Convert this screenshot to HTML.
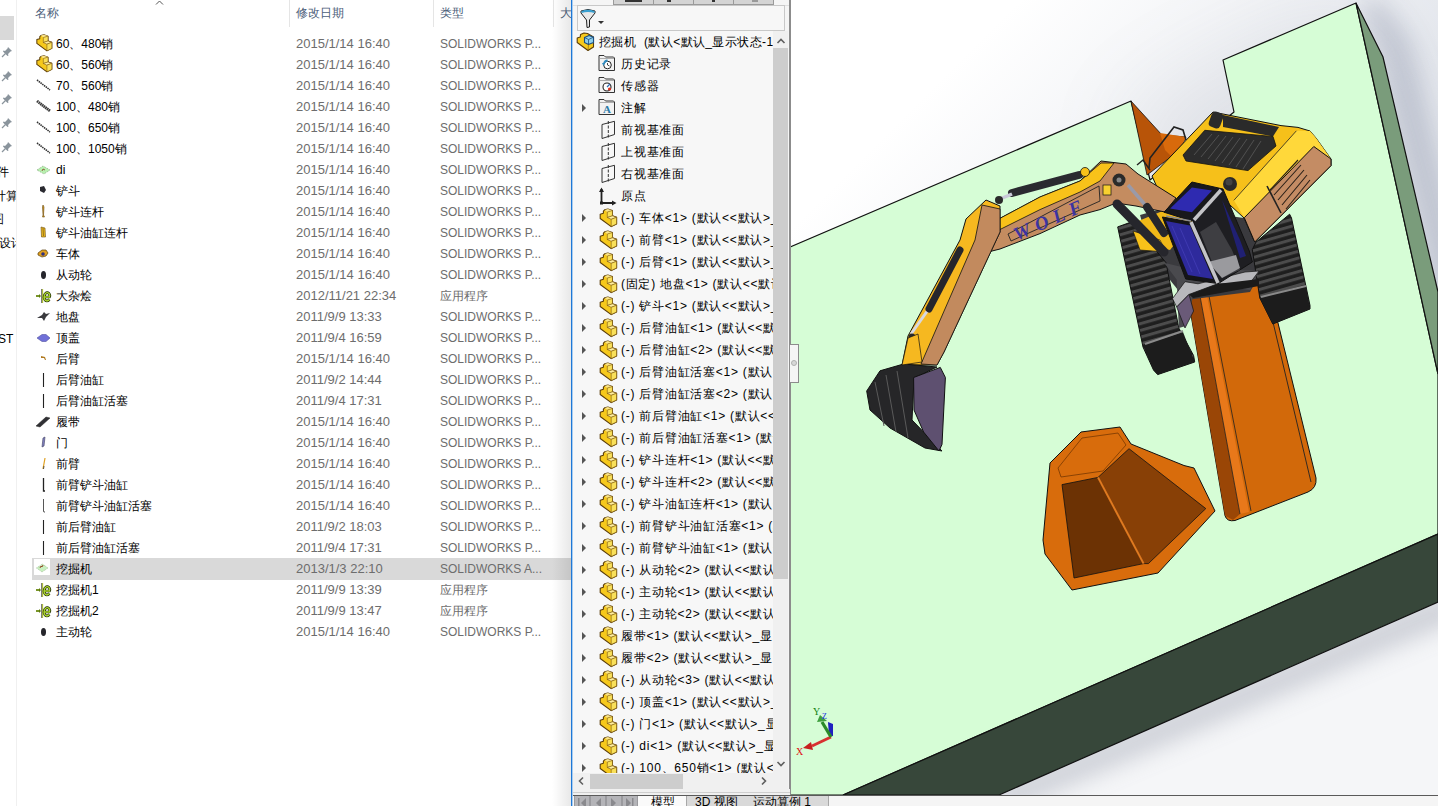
<!DOCTYPE html><html><head><meta charset="utf-8"><style>
*{margin:0;padding:0;box-sizing:border-box}
html,body{width:1438px;height:806px;overflow:hidden;background:#fff;font-family:"Liberation Sans",sans-serif;}
.abs{position:absolute}
.nav{left:0;top:0;width:16px;height:806px;background:#fff;overflow:hidden}
.navsel{left:0;top:16px;width:14px;height:24px;background:#d9d9d9}
.navdiv{left:16px;top:0;width:1px;height:806px;background:#f0f0f0}
.hdr{font-size:12px;color:#4c607a;top:5px;line-height:16px;white-space:nowrap}
.coldiv{top:0;width:1px;height:27px;background:#e5e5e5}
.row{left:0;height:21px;width:571px}
.name{position:absolute;left:56px;top:1px;font-size:12px;line-height:21px;color:#000;white-space:nowrap;font-weight:500}
.date{position:absolute;left:296px;top:0;font-size:13px;line-height:21px;color:#6d6d6d;white-space:nowrap}
.type{position:absolute;left:440px;top:1px;font-size:12px;line-height:21px;color:#6d6d6d;white-space:nowrap}
.ico{position:absolute;left:36px;top:3px}
.sw{left:571px;top:0;width:219px;height:806px;background:#f5f5f5;overflow:hidden}
.tr{position:absolute;left:0;height:22px;width:202px;white-space:nowrap;overflow:hidden}
.tt{position:absolute;top:0;font-size:12px;line-height:22px;color:#000;white-space:nowrap;letter-spacing:0.75px;font-weight:500}
.exp{position:absolute;left:11px;top:7px;width:0;height:0;border-top:4px solid transparent;border-bottom:4px solid transparent;border-left:4px solid #555}
</style></head><body>

<div class="abs nav">
<div class="abs navsel"></div>
<svg class="abs" style="left:1px;top:46px" width="12" height="12" viewBox="0 0 12 12"><path d="M7 1 L11 5 L9.5 5.5 L7 8 L7.5 9.5 L6.5 10 L2 5.5 L2.5 4.5 L4 5 L6.5 2.5 Z" fill="#8a949c"/><path d="M4.5 7.5 L1 11" stroke="#8a949c" stroke-width="1.3"/></svg>
<svg class="abs" style="left:1px;top:70px" width="12" height="12" viewBox="0 0 12 12"><path d="M7 1 L11 5 L9.5 5.5 L7 8 L7.5 9.5 L6.5 10 L2 5.5 L2.5 4.5 L4 5 L6.5 2.5 Z" fill="#8a949c"/><path d="M4.5 7.5 L1 11" stroke="#8a949c" stroke-width="1.3"/></svg>
<svg class="abs" style="left:1px;top:93px" width="12" height="12" viewBox="0 0 12 12"><path d="M7 1 L11 5 L9.5 5.5 L7 8 L7.5 9.5 L6.5 10 L2 5.5 L2.5 4.5 L4 5 L6.5 2.5 Z" fill="#8a949c"/><path d="M4.5 7.5 L1 11" stroke="#8a949c" stroke-width="1.3"/></svg>
<svg class="abs" style="left:1px;top:117px" width="12" height="12" viewBox="0 0 12 12"><path d="M7 1 L11 5 L9.5 5.5 L7 8 L7.5 9.5 L6.5 10 L2 5.5 L2.5 4.5 L4 5 L6.5 2.5 Z" fill="#8a949c"/><path d="M4.5 7.5 L1 11" stroke="#8a949c" stroke-width="1.3"/></svg>
<svg class="abs" style="left:1px;top:141px" width="12" height="12" viewBox="0 0 12 12"><path d="M7 1 L11 5 L9.5 5.5 L7 8 L7.5 9.5 L6.5 10 L2 5.5 L2.5 4.5 L4 5 L6.5 2.5 Z" fill="#8a949c"/><path d="M4.5 7.5 L1 11" stroke="#8a949c" stroke-width="1.3"/></svg>
<div class="abs" style="left:-15px;top:164px;font-size:12px;line-height:16px;color:#000;white-space:nowrap">文件</div>
<div class="abs" style="left:-6px;top:188px;font-size:12px;line-height:16px;color:#000;white-space:nowrap">计算</div>
<div class="abs" style="left:-8px;top:211px;font-size:12px;line-height:16px;color:#000;white-space:nowrap">图</div>
<div class="abs" style="left:-1px;top:235px;font-size:12px;line-height:16px;color:#000;white-space:nowrap">设计</div>
<div class="abs" style="left:-2px;top:331px;font-size:12px;line-height:16px;color:#000;white-space:nowrap">ST</div>
</div>
<div class="abs navdiv"></div>
<svg class="abs" style="left:155px;top:0" width="9" height="6"><path d="M1 4.5 L4.5 1 L8 4.5" stroke="#555" fill="none" stroke-width="1"/></svg>
<div class="abs hdr" style="left:35px">名称</div>
<div class="abs coldiv" style="left:289px"></div>
<div class="abs hdr" style="left:296px">修改日期</div>
<div class="abs coldiv" style="left:433px"></div>
<div class="abs hdr" style="left:440px">类型</div>
<div class="abs coldiv" style="left:553px"></div>
<div class="abs hdr" style="left:560px">大小</div>
<div class="abs row" style="top:33px"><svg class="ico" width="20" height="20" viewBox="0 0 20 20" style="left:34px;top:1px"></svg><svg class="ico" width="24" height="24" viewBox="0 0 24 24" style="left:33px;top:-1px;transform:scale(0.915);transform-origin:0 0;"><path d="M4.2 8.3 L7.4 7.3 L7.4 5.1 L8.6 3.9 L11.9 3.1 L16.4 4.5 L16.5 9.8 L20.6 11.3 L20.6 17.9 L15.2 20.6 L4.2 12.5 Z" fill="#f6c91c" stroke="#5a3c08" stroke-width="1.1" stroke-linejoin="round"/><path d="M8.6 3.9 L11.9 3.1 L16.4 4.5 L11.3 6 Z" fill="#fbe58a"/><path d="M11.3 6 L16.4 4.5 L16.5 9.8 L11.3 11.5 Z" fill="#f9e05a" stroke="#7a5510" stroke-width="0.6"/><path d="M11.3 11.5 L16.5 9.8 L20.6 11.3 L15.2 13.3 Z" fill="#fdeea0" stroke="#7a5510" stroke-width="0.6"/><path d="M15.2 13.3 L20.6 11.3 L20.6 17.9 L15.2 20.6 Z" fill="#f9e05a" stroke="#7a5510" stroke-width="0.6"/></svg><div class="name">60、480销</div><div class="date">2015/1/14 16:40</div><div class="type">SOLIDWORKS P...</div></div>
<div class="abs row" style="top:54px"><svg class="ico" width="20" height="20" viewBox="0 0 20 20" style="left:34px;top:1px"></svg><svg class="ico" width="24" height="24" viewBox="0 0 24 24" style="left:33px;top:-1px;transform:scale(0.915);transform-origin:0 0;"><path d="M4.2 8.3 L7.4 7.3 L7.4 5.1 L8.6 3.9 L11.9 3.1 L16.4 4.5 L16.5 9.8 L20.6 11.3 L20.6 17.9 L15.2 20.6 L4.2 12.5 Z" fill="#f6c91c" stroke="#5a3c08" stroke-width="1.1" stroke-linejoin="round"/><path d="M8.6 3.9 L11.9 3.1 L16.4 4.5 L11.3 6 Z" fill="#fbe58a"/><path d="M11.3 6 L16.4 4.5 L16.5 9.8 L11.3 11.5 Z" fill="#f9e05a" stroke="#7a5510" stroke-width="0.6"/><path d="M11.3 11.5 L16.5 9.8 L20.6 11.3 L15.2 13.3 Z" fill="#fdeea0" stroke="#7a5510" stroke-width="0.6"/><path d="M15.2 13.3 L20.6 11.3 L20.6 17.9 L15.2 20.6 Z" fill="#f9e05a" stroke="#7a5510" stroke-width="0.6"/></svg><div class="name">60、560销</div><div class="date">2015/1/14 16:40</div><div class="type">SOLIDWORKS P...</div></div>
<div class="abs row" style="top:75px"><svg class="ico" width="20" height="20" viewBox="0 0 20 20" style="left:34px;top:1px"><path d="M3 4 L16 14" stroke="#333" stroke-width="1.6" stroke-dasharray="1.5 0.7"/></svg><div class="name">70、560销</div><div class="date">2015/1/14 16:40</div><div class="type">SOLIDWORKS P...</div></div>
<div class="abs row" style="top:96px"><svg class="ico" width="20" height="20" viewBox="0 0 20 20" style="left:34px;top:1px"><path d="M3 4 L16 14" stroke="#3a3a3a" stroke-width="2.8" stroke-dasharray="1.6 0.5"/></svg><div class="name">100、480销</div><div class="date">2015/1/14 16:40</div><div class="type">SOLIDWORKS P...</div></div>
<div class="abs row" style="top:117px"><svg class="ico" width="20" height="20" viewBox="0 0 20 20" style="left:34px;top:1px"><path d="M3 4 L16 14" stroke="#333" stroke-width="1.6" stroke-dasharray="1.5 0.7"/></svg><div class="name">100、650销</div><div class="date">2015/1/14 16:40</div><div class="type">SOLIDWORKS P...</div></div>
<div class="abs row" style="top:138px"><svg class="ico" width="20" height="20" viewBox="0 0 20 20" style="left:34px;top:1px"><path d="M3 4 L16 14" stroke="#333" stroke-width="1.6" stroke-dasharray="1.5 0.7"/></svg><div class="name">100、1050销</div><div class="date">2015/1/14 16:40</div><div class="type">SOLIDWORKS P...</div></div>
<div class="abs row" style="top:159px"><svg class="ico" width="20" height="20" viewBox="0 0 20 20" style="left:34px;top:1px"><path d="M3 10 L9 6 L16 10 L10 14 Z" fill="#b8f0b0" stroke="#6a8a60" stroke-width="0.6" stroke-dasharray="1 1"/><path d="M8 11 L9 9 L11 10" stroke="#804020" stroke-width="0.8" fill="none"/></svg><div class="name">di</div><div class="date">2015/1/14 16:40</div><div class="type">SOLIDWORKS P...</div></div>
<div class="abs row" style="top:180px"><svg class="ico" width="20" height="20" viewBox="0 0 20 20" style="left:34px;top:1px"><path d="M6 6 L10 5 L12 9 L10 12 L6 10 Z" fill="#2a2a30"/></svg><div class="name">铲斗</div><div class="date">2015/1/14 16:40</div><div class="type">SOLIDWORKS P...</div></div>
<div class="abs row" style="top:201px"><svg class="ico" width="20" height="20" viewBox="0 0 20 20" style="left:34px;top:1px"><path d="M9 3 L10 5 L9.5 13 L10.5 15 L8.5 15 L9 13 L8.5 5 Z" fill="#d49a20" stroke="#6a4a10" stroke-width="0.6"/></svg><div class="name">铲斗连杆</div><div class="date">2015/1/14 16:40</div><div class="type">SOLIDWORKS P...</div></div>
<div class="abs row" style="top:222px"><svg class="ico" width="20" height="20" viewBox="0 0 20 20" style="left:34px;top:1px"><path d="M7 4 L11 5 L11.5 14 L7.5 14 Z" fill="#e8b820" stroke="#6a4a10" stroke-width="0.6"/><path d="M9 5 L9.5 13" stroke="#6a4a10" stroke-width="0.6"/></svg><div class="name">铲斗油缸连杆</div><div class="date">2015/1/14 16:40</div><div class="type">SOLIDWORKS P...</div></div>
<div class="abs row" style="top:243px"><svg class="ico" width="20" height="20" viewBox="0 0 20 20" style="left:34px;top:1px"><path d="M4 9 L8 6 L12 6 L14 9 L12 12 L8 13 L4 11 Z" fill="#e0a020" stroke="#5a4010" stroke-width="0.7"/><circle cx="9" cy="10" r="1.8" fill="#303080"/></svg><div class="name">车体</div><div class="date">2015/1/14 16:40</div><div class="type">SOLIDWORKS P...</div></div>
<div class="abs row" style="top:264px"><svg class="ico" width="20" height="20" viewBox="0 0 20 20" style="left:34px;top:1px"><ellipse cx="9.5" cy="10" rx="2.5" ry="4" fill="#26262c"/></svg><div class="name">从动轮</div><div class="date">2015/1/14 16:40</div><div class="type">SOLIDWORKS P...</div></div>
<div class="abs row" style="top:285px"><svg class="ico" width="20" height="20" viewBox="0 0 20 20" style="left:34px;top:1px"><path d="M2 10 L6 10" stroke="#6a8a10" stroke-width="1.8"/><path d="M5 8 L7 10 L5 12 Z" fill="#5a7a08"/><path d="M8 3 L8 17" stroke="#222" stroke-width="1.2"/><path d="M8.7 3 L8.7 17" stroke="#c8e020" stroke-width="0.8"/><path d="M15.5 13.5 Q13 16 11 14 Q9 11.5 11 8 Q13 5.5 15 7.5 Q16.5 9.5 15.5 11 L10.5 11" fill="none" stroke="#1a2a00" stroke-width="2.6"/><path d="M15.5 13.5 Q13 16 11 14 Q9 11.5 11 8 Q13 5.5 15 7.5 Q16.5 9.5 15.5 11 L10.5 11" fill="none" stroke="#b0d830" stroke-width="1.4"/></svg><div class="name">大杂烩</div><div class="date">2012/11/21 22:34</div><div class="type">应用程序</div></div>
<div class="abs row" style="top:306px"><svg class="ico" width="20" height="20" viewBox="0 0 20 20" style="left:34px;top:1px"><path d="M3 11 L8 8 L10 5 L12 7 L16 6 L12 10 L10 14 L8 11 Z" fill="#3a3a3e"/></svg><div class="name">地盘</div><div class="date">2011/9/9 13:33</div><div class="type">SOLIDWORKS P...</div></div>
<div class="abs row" style="top:327px"><svg class="ico" width="20" height="20" viewBox="0 0 20 20" style="left:34px;top:1px"><path d="M3 10 L8 6.5 L12 6.5 L16 10 L12 13.5 L8 13.5 Z" fill="#7070d8" stroke="#5050a0" stroke-width="0.6"/></svg><div class="name">顶盖</div><div class="date">2011/9/4 16:59</div><div class="type">SOLIDWORKS P...</div></div>
<div class="abs row" style="top:348px"><svg class="ico" width="20" height="20" viewBox="0 0 20 20" style="left:34px;top:1px"><path d="M7 7 L11 8 L12 11 L11 11 L10 9 L7 9 Z" fill="#b07a20"/></svg><div class="name">后臂</div><div class="date">2015/1/14 16:40</div><div class="type">SOLIDWORKS P...</div></div>
<div class="abs row" style="top:369px"><svg class="ico" width="20" height="20" viewBox="0 0 20 20" style="left:34px;top:1px"><path d="M9.5 3 L9.5 17" stroke="#222" stroke-width="1.1"/></svg><div class="name">后臂油缸</div><div class="date">2011/9/2 14:44</div><div class="type">SOLIDWORKS P...</div></div>
<div class="abs row" style="top:390px"><svg class="ico" width="20" height="20" viewBox="0 0 20 20" style="left:34px;top:1px"><path d="M9.5 3 L9.5 17" stroke="#222" stroke-width="1.1"/></svg><div class="name">后臂油缸活塞</div><div class="date">2011/9/4 17:31</div><div class="type">SOLIDWORKS P...</div></div>
<div class="abs row" style="top:411px"><svg class="ico" width="20" height="20" viewBox="0 0 20 20" style="left:34px;top:1px"><path d="M2 14 L12 5 L16 6 L6 15 Z" fill="#303034" stroke="#222" stroke-width="0.5"/></svg><div class="name">履带</div><div class="date">2015/1/14 16:40</div><div class="type">SOLIDWORKS P...</div></div>
<div class="abs row" style="top:432px"><svg class="ico" width="20" height="20" viewBox="0 0 20 20" style="left:34px;top:1px"><path d="M8 14 L9 5 L11 4 L10 13 Z" fill="#8080c0" stroke="#404060" stroke-width="0.6"/></svg><div class="name">门</div><div class="date">2015/1/14 16:40</div><div class="type">SOLIDWORKS P...</div></div>
<div class="abs row" style="top:453px"><svg class="ico" width="20" height="20" viewBox="0 0 20 20" style="left:34px;top:1px"><path d="M9 15 L11 4" stroke="#e0a020" stroke-width="1.2"/><path d="M9.5 15 L10 12" stroke="#333" stroke-width="0.8"/></svg><div class="name">前臂</div><div class="date">2015/1/14 16:40</div><div class="type">SOLIDWORKS P...</div></div>
<div class="abs row" style="top:474px"><svg class="ico" width="20" height="20" viewBox="0 0 20 20" style="left:34px;top:1px"><path d="M9.5 3 L9.5 16 L11 16" stroke="#222" stroke-width="1.3" fill="none"/></svg><div class="name">前臂铲斗油缸</div><div class="date">2015/1/14 16:40</div><div class="type">SOLIDWORKS P...</div></div>
<div class="abs row" style="top:495px"><svg class="ico" width="20" height="20" viewBox="0 0 20 20" style="left:34px;top:1px"><path d="M9.5 3 L9.5 15 Q9.5 16.5 11 16" stroke="#444" stroke-width="0.9" fill="none"/></svg><div class="name">前臂铲斗油缸活塞</div><div class="date">2015/1/14 16:40</div><div class="type">SOLIDWORKS P...</div></div>
<div class="abs row" style="top:516px"><svg class="ico" width="20" height="20" viewBox="0 0 20 20" style="left:34px;top:1px"><path d="M9.5 3 L9.5 17" stroke="#222" stroke-width="1.1"/></svg><div class="name">前后臂油缸</div><div class="date">2011/9/2 18:03</div><div class="type">SOLIDWORKS P...</div></div>
<div class="abs row" style="top:537px"><svg class="ico" width="20" height="20" viewBox="0 0 20 20" style="left:34px;top:1px"><path d="M9.5 3 L9.5 17" stroke="#222" stroke-width="1.1"/></svg><div class="name">前后臂油缸活塞</div><div class="date">2011/9/4 17:31</div><div class="type">SOLIDWORKS P...</div></div>
<div class="abs" style="left:32px;top:558px;width:539px;height:22px;background:#d9d9d9"></div>
<div class="abs row" style="top:558px"><svg class="ico" width="20" height="20" viewBox="0 0 20 20" style="left:34px;top:1px"><rect x="0" y="0" width="16" height="16" fill="#fff"/><path d="M2.5 9 L8.5 5 L14 9 L8 13 Z" fill="#c8f0c0" stroke="#80a070" stroke-width="0.5" stroke-dasharray="1 0.8"/><path d="M6 9 L7 7 L8 8 L9 6" stroke="#903818" stroke-width="0.9" fill="none"/></svg><div class="name">挖掘机</div><div class="date">2013/1/3 22:10</div><div class="type">SOLIDWORKS A...</div></div>
<div class="abs row" style="top:579px"><svg class="ico" width="20" height="20" viewBox="0 0 20 20" style="left:34px;top:1px"><path d="M2 10 L6 10" stroke="#6a8a10" stroke-width="1.8"/><path d="M5 8 L7 10 L5 12 Z" fill="#5a7a08"/><path d="M8 3 L8 17" stroke="#222" stroke-width="1.2"/><path d="M8.7 3 L8.7 17" stroke="#c8e020" stroke-width="0.8"/><path d="M15.5 13.5 Q13 16 11 14 Q9 11.5 11 8 Q13 5.5 15 7.5 Q16.5 9.5 15.5 11 L10.5 11" fill="none" stroke="#1a2a00" stroke-width="2.6"/><path d="M15.5 13.5 Q13 16 11 14 Q9 11.5 11 8 Q13 5.5 15 7.5 Q16.5 9.5 15.5 11 L10.5 11" fill="none" stroke="#b0d830" stroke-width="1.4"/></svg><div class="name">挖掘机1</div><div class="date">2011/9/9 13:39</div><div class="type">应用程序</div></div>
<div class="abs row" style="top:600px"><svg class="ico" width="20" height="20" viewBox="0 0 20 20" style="left:34px;top:1px"><path d="M2 10 L6 10" stroke="#6a8a10" stroke-width="1.8"/><path d="M5 8 L7 10 L5 12 Z" fill="#5a7a08"/><path d="M8 3 L8 17" stroke="#222" stroke-width="1.2"/><path d="M8.7 3 L8.7 17" stroke="#c8e020" stroke-width="0.8"/><path d="M15.5 13.5 Q13 16 11 14 Q9 11.5 11 8 Q13 5.5 15 7.5 Q16.5 9.5 15.5 11 L10.5 11" fill="none" stroke="#1a2a00" stroke-width="2.6"/><path d="M15.5 13.5 Q13 16 11 14 Q9 11.5 11 8 Q13 5.5 15 7.5 Q16.5 9.5 15.5 11 L10.5 11" fill="none" stroke="#b0d830" stroke-width="1.4"/></svg><div class="name">挖掘机2</div><div class="date">2011/9/9 13:47</div><div class="type">应用程序</div></div>
<div class="abs row" style="top:621px"><svg class="ico" width="20" height="20" viewBox="0 0 20 20" style="left:34px;top:1px"><ellipse cx="9.5" cy="10" rx="2.5" ry="4" fill="#26262c"/></svg><div class="name">主动轮</div><div class="date">2015/1/14 16:40</div><div class="type">SOLIDWORKS P...</div></div>
<div class="abs" style="left:552px;top:0;width:19px;height:806px;background:linear-gradient(to right,rgba(0,0,0,0),rgba(0,0,0,0.09))"></div>
<div class="abs sw">
<div class="abs" style="left:43px;top:0;width:160px;height:5px;background:#d4d4d4;border-bottom:1px solid #9a9a9a"></div>
<div class="abs" style="left:82px;top:0;width:1px;height:5px;background:#9a9a9a"></div>
<div class="abs" style="left:122px;top:0;width:1px;height:5px;background:#9a9a9a"></div>
<div class="abs" style="left:162px;top:0;width:1px;height:5px;background:#9a9a9a"></div>
<div class="abs" style="left:42px;top:0;width:1px;height:5px;background:#9a9a9a"></div>
<div class="abs" style="left:202px;top:0;width:1px;height:5px;background:#9a9a9a"></div>
<div class="abs" style="left:54px;top:0;width:17px;height:2px;background:#333"></div>
<div class="abs" style="left:96px;top:0;width:4px;height:2px;background:#333"></div>
<div class="abs" style="left:141px;top:0;width:3px;height:2px;background:#333"></div>
<div class="abs" style="left:181px;top:0;width:6px;height:2px;background:#999"></div>
<div class="abs" style="left:0;top:5px;width:219px;height:1px;background:#e0e0e0"></div>
<div class="abs" style="left:6px;top:5px;width:208px;height:26px;border:1px solid #c8c8c8;background:#f7f7f7"></div>
<svg class="abs" style="left:8px;top:8px" width="28" height="22" viewBox="0 0 28 22"><path d="M2 3 Q9 0 16 3 L16 5 L10.5 12 L10.5 19 L8 19.5 L7.5 12 L2 5 Z" fill="#e8e8e8" stroke="#222" stroke-width="1"/><path d="M2.5 3 Q9 0.5 15.5 3 L15.5 5 Q9 3 2.5 5 Z" fill="#3aa0d0"/><path d="M19 13 L25 13 L22 16 Z" fill="#333"/></svg>
<div class="abs" style="left:2px;top:31px;width:200px;height:742px;overflow:hidden;background:#f7f7f7">
<svg class="abs" style="left:1px;top:-1px" width="24" height="24" viewBox="0 0 24 24"><path d="M3.2 8 L6.3 7 L6.5 4.5 L10 3 L13.5 3.5 L19.5 7 L19.5 17 L14 20.5 L3.2 12.5 Z" fill="#f6c91c" stroke="#5a3c08" stroke-width="1.1" stroke-linejoin="round"/><path d="M10.5 7.5 L15 5.5 L19.5 7.2 L19.5 12.5 L14.5 14.5 L10.5 12.5 Z" fill="#8fd0ec" stroke="#1a4d80" stroke-width="1.1" stroke-linejoin="round"/><path d="M10.5 7.5 L14.5 9.5 L19.5 7.2 M14.5 9.5 L14.5 14.5" stroke="#1a4d80" stroke-width="0.8" fill="none"/><path d="M14.5 14.5 L14 20.5" stroke="#7a5510" stroke-width="0.6"/></svg>
<div class="tt" style="left:26px;top:0px;letter-spacing:0.4px">挖掘机<span style="margin-left:4px"></span> (默认&lt;默认_显示状态-1:</div>
<svg class="abs" style="left:23px;top:21px" width="24" height="24" viewBox="0 0 24 24"><path d="M3 3.5 L8 3.5 L9.5 5 L17.5 5 L18.5 6 L18.5 18.5 L3 18.5 Z" fill="#f2f2f2" stroke="#333" stroke-width="1" stroke-linejoin="round"/><path d="M3.5 6.5 L18 6.5" stroke="#999" stroke-width="0.8"/><circle cx="11.5" cy="13" r="3.8" fill="#fff" stroke="#222" stroke-width="1"/><path d="M11.5 11 L11.5 13 L13.5 14" stroke="#222" stroke-width="0.8" fill="none"/><path d="M8 11.5 A4 4 0 0 1 11.5 8.5" stroke="#2e8bc0" stroke-width="1.8" fill="none"/><path d="M6 11 L9 11 L7.5 14 Z" fill="#2e8bc0"/></svg>
<div class="tt" style="left:48px;top:22px;">历史记录</div>
<svg class="abs" style="left:23px;top:43px" width="24" height="24" viewBox="0 0 24 24"><path d="M3 3.5 L8 3.5 L9.5 5 L17.5 5 L18.5 6 L18.5 18.5 L3 18.5 Z" fill="#f2f2f2" stroke="#333" stroke-width="1" stroke-linejoin="round"/><path d="M3.5 6.5 L18 6.5" stroke="#999" stroke-width="0.8"/><circle cx="11" cy="13" r="4" fill="#fff" stroke="#222" stroke-width="1.1"/><path d="M11 13 L14 10" stroke="#2e6bb0" stroke-width="1.2"/><circle cx="13.5" cy="15" r="1.6" fill="#e03020"/></svg>
<div class="tt" style="left:48px;top:44px;">传感器</div>
<div class="exp" style="top:73px;left:9px"></div>
<svg class="abs" style="left:23px;top:65px" width="24" height="24" viewBox="0 0 24 24"><path d="M3 3.5 L8 3.5 L9.5 5 L17.5 5 L18.5 6 L18.5 18.5 L3 18.5 Z" fill="#f2f2f2" stroke="#333" stroke-width="1" stroke-linejoin="round"/><path d="M3.5 6.5 L18 6.5" stroke="#999" stroke-width="0.8"/><text x="7" y="17" font-family="Liberation Serif" font-weight="bold" font-size="11" fill="#2a7aa8">A</text></svg>
<div class="tt" style="left:48px;top:66px;">注解</div>
<svg class="abs" style="left:23px;top:87px" width="24" height="24" viewBox="0 0 24 24"><path d="M6 6.5 L18.5 3.3 L18.5 16.5 L6 20.5 Z" fill="none" stroke="#333" stroke-width="1"/><path d="M12.3 3 L12.3 21" stroke="#333" stroke-width="1" stroke-dasharray="3 1.5"/></svg>
<div class="tt" style="left:48px;top:88px;">前视基准面</div>
<svg class="abs" style="left:23px;top:109px" width="24" height="24" viewBox="0 0 24 24"><path d="M6 6.5 L18.5 3.3 L18.5 16.5 L6 20.5 Z" fill="none" stroke="#333" stroke-width="1"/><path d="M12.3 3 L12.3 21" stroke="#333" stroke-width="1" stroke-dasharray="3 1.5"/></svg>
<div class="tt" style="left:48px;top:110px;">上视基准面</div>
<svg class="abs" style="left:23px;top:131px" width="24" height="24" viewBox="0 0 24 24"><path d="M6 6.5 L18.5 3.3 L18.5 16.5 L6 20.5 Z" fill="none" stroke="#333" stroke-width="1"/><path d="M12.3 3 L12.3 21" stroke="#333" stroke-width="1" stroke-dasharray="3 1.5"/></svg>
<div class="tt" style="left:48px;top:132px;">右视基准面</div>
<svg class="abs" style="left:23px;top:153px" width="24" height="24" viewBox="0 0 24 24"><path d="M5.5 5 L5.5 19 L19 19" stroke="#222" stroke-width="1.8" fill="none"/><path d="M3 8 L5.5 3.5 L8 8 Z M16 16.5 L20.5 19 L16 21.5 Z" fill="#222"/><rect x="4" y="17.5" width="3" height="3" fill="#222"/></svg>
<div class="tt" style="left:48px;top:154px;">原点</div>
<div class="exp" style="top:183px;left:9px"></div>
<svg class="abs" style="left:23px;top:175px" width="24" height="24" viewBox="0 0 24 24"><path d="M4.2 8.3 L7.4 7.3 L7.4 5.1 L8.6 3.9 L11.9 3.1 L16.4 4.5 L16.5 9.8 L20.6 11.3 L20.6 17.9 L15.2 20.6 L4.2 12.5 Z" fill="#f6c91c" stroke="#5a3c08" stroke-width="1.1" stroke-linejoin="round"/><path d="M8.6 3.9 L11.9 3.1 L16.4 4.5 L11.3 6 Z" fill="#fbe58a"/><path d="M11.3 6 L16.4 4.5 L16.5 9.8 L11.3 11.5 Z" fill="#f9e05a" stroke="#7a5510" stroke-width="0.6"/><path d="M11.3 11.5 L16.5 9.8 L20.6 11.3 L15.2 13.3 Z" fill="#fdeea0" stroke="#7a5510" stroke-width="0.6"/><path d="M15.2 13.3 L20.6 11.3 L20.6 17.9 L15.2 20.6 Z" fill="#f9e05a" stroke="#7a5510" stroke-width="0.6"/></svg>
<div class="tt" style="left:48px;top:176px;">(-) 车体&lt;1&gt; (默认&lt;&lt;默认&gt;_显示状态 1&gt;)</div>
<div class="exp" style="top:205px;left:9px"></div>
<svg class="abs" style="left:23px;top:197px" width="24" height="24" viewBox="0 0 24 24"><path d="M4.2 8.3 L7.4 7.3 L7.4 5.1 L8.6 3.9 L11.9 3.1 L16.4 4.5 L16.5 9.8 L20.6 11.3 L20.6 17.9 L15.2 20.6 L4.2 12.5 Z" fill="#f6c91c" stroke="#5a3c08" stroke-width="1.1" stroke-linejoin="round"/><path d="M8.6 3.9 L11.9 3.1 L16.4 4.5 L11.3 6 Z" fill="#fbe58a"/><path d="M11.3 6 L16.4 4.5 L16.5 9.8 L11.3 11.5 Z" fill="#f9e05a" stroke="#7a5510" stroke-width="0.6"/><path d="M11.3 11.5 L16.5 9.8 L20.6 11.3 L15.2 13.3 Z" fill="#fdeea0" stroke="#7a5510" stroke-width="0.6"/><path d="M15.2 13.3 L20.6 11.3 L20.6 17.9 L15.2 20.6 Z" fill="#f9e05a" stroke="#7a5510" stroke-width="0.6"/></svg>
<div class="tt" style="left:48px;top:198px;">(-) 前臂&lt;1&gt; (默认&lt;&lt;默认&gt;_显示状态 1&gt;)</div>
<div class="exp" style="top:227px;left:9px"></div>
<svg class="abs" style="left:23px;top:219px" width="24" height="24" viewBox="0 0 24 24"><path d="M4.2 8.3 L7.4 7.3 L7.4 5.1 L8.6 3.9 L11.9 3.1 L16.4 4.5 L16.5 9.8 L20.6 11.3 L20.6 17.9 L15.2 20.6 L4.2 12.5 Z" fill="#f6c91c" stroke="#5a3c08" stroke-width="1.1" stroke-linejoin="round"/><path d="M8.6 3.9 L11.9 3.1 L16.4 4.5 L11.3 6 Z" fill="#fbe58a"/><path d="M11.3 6 L16.4 4.5 L16.5 9.8 L11.3 11.5 Z" fill="#f9e05a" stroke="#7a5510" stroke-width="0.6"/><path d="M11.3 11.5 L16.5 9.8 L20.6 11.3 L15.2 13.3 Z" fill="#fdeea0" stroke="#7a5510" stroke-width="0.6"/><path d="M15.2 13.3 L20.6 11.3 L20.6 17.9 L15.2 20.6 Z" fill="#f9e05a" stroke="#7a5510" stroke-width="0.6"/></svg>
<div class="tt" style="left:48px;top:220px;">(-) 后臂&lt;1&gt; (默认&lt;&lt;默认&gt;_显示状态 1&gt;)</div>
<div class="exp" style="top:249px;left:9px"></div>
<svg class="abs" style="left:23px;top:241px" width="24" height="24" viewBox="0 0 24 24"><path d="M4.2 8.3 L7.4 7.3 L7.4 5.1 L8.6 3.9 L11.9 3.1 L16.4 4.5 L16.5 9.8 L20.6 11.3 L20.6 17.9 L15.2 20.6 L4.2 12.5 Z" fill="#f6c91c" stroke="#5a3c08" stroke-width="1.1" stroke-linejoin="round"/><path d="M8.6 3.9 L11.9 3.1 L16.4 4.5 L11.3 6 Z" fill="#fbe58a"/><path d="M11.3 6 L16.4 4.5 L16.5 9.8 L11.3 11.5 Z" fill="#f9e05a" stroke="#7a5510" stroke-width="0.6"/><path d="M11.3 11.5 L16.5 9.8 L20.6 11.3 L15.2 13.3 Z" fill="#fdeea0" stroke="#7a5510" stroke-width="0.6"/><path d="M15.2 13.3 L20.6 11.3 L20.6 17.9 L15.2 20.6 Z" fill="#f9e05a" stroke="#7a5510" stroke-width="0.6"/></svg>
<div class="tt" style="left:48px;top:242px;">(固定) 地盘&lt;1&gt; (默认&lt;&lt;默认&gt;_显示状态 1&gt;)</div>
<div class="exp" style="top:271px;left:9px"></div>
<svg class="abs" style="left:23px;top:263px" width="24" height="24" viewBox="0 0 24 24"><path d="M4.2 8.3 L7.4 7.3 L7.4 5.1 L8.6 3.9 L11.9 3.1 L16.4 4.5 L16.5 9.8 L20.6 11.3 L20.6 17.9 L15.2 20.6 L4.2 12.5 Z" fill="#f6c91c" stroke="#5a3c08" stroke-width="1.1" stroke-linejoin="round"/><path d="M8.6 3.9 L11.9 3.1 L16.4 4.5 L11.3 6 Z" fill="#fbe58a"/><path d="M11.3 6 L16.4 4.5 L16.5 9.8 L11.3 11.5 Z" fill="#f9e05a" stroke="#7a5510" stroke-width="0.6"/><path d="M11.3 11.5 L16.5 9.8 L20.6 11.3 L15.2 13.3 Z" fill="#fdeea0" stroke="#7a5510" stroke-width="0.6"/><path d="M15.2 13.3 L20.6 11.3 L20.6 17.9 L15.2 20.6 Z" fill="#f9e05a" stroke="#7a5510" stroke-width="0.6"/></svg>
<div class="tt" style="left:48px;top:264px;">(-) 铲斗&lt;1&gt; (默认&lt;&lt;默认&gt;_显示状态 1&gt;)</div>
<div class="exp" style="top:293px;left:9px"></div>
<svg class="abs" style="left:23px;top:285px" width="24" height="24" viewBox="0 0 24 24"><path d="M4.2 8.3 L7.4 7.3 L7.4 5.1 L8.6 3.9 L11.9 3.1 L16.4 4.5 L16.5 9.8 L20.6 11.3 L20.6 17.9 L15.2 20.6 L4.2 12.5 Z" fill="#f6c91c" stroke="#5a3c08" stroke-width="1.1" stroke-linejoin="round"/><path d="M8.6 3.9 L11.9 3.1 L16.4 4.5 L11.3 6 Z" fill="#fbe58a"/><path d="M11.3 6 L16.4 4.5 L16.5 9.8 L11.3 11.5 Z" fill="#f9e05a" stroke="#7a5510" stroke-width="0.6"/><path d="M11.3 11.5 L16.5 9.8 L20.6 11.3 L15.2 13.3 Z" fill="#fdeea0" stroke="#7a5510" stroke-width="0.6"/><path d="M15.2 13.3 L20.6 11.3 L20.6 17.9 L15.2 20.6 Z" fill="#f9e05a" stroke="#7a5510" stroke-width="0.6"/></svg>
<div class="tt" style="left:48px;top:286px;">(-) 后臂油缸&lt;1&gt; (默认&lt;&lt;默认&gt;_显示状态 1&gt;)</div>
<div class="exp" style="top:315px;left:9px"></div>
<svg class="abs" style="left:23px;top:307px" width="24" height="24" viewBox="0 0 24 24"><path d="M4.2 8.3 L7.4 7.3 L7.4 5.1 L8.6 3.9 L11.9 3.1 L16.4 4.5 L16.5 9.8 L20.6 11.3 L20.6 17.9 L15.2 20.6 L4.2 12.5 Z" fill="#f6c91c" stroke="#5a3c08" stroke-width="1.1" stroke-linejoin="round"/><path d="M8.6 3.9 L11.9 3.1 L16.4 4.5 L11.3 6 Z" fill="#fbe58a"/><path d="M11.3 6 L16.4 4.5 L16.5 9.8 L11.3 11.5 Z" fill="#f9e05a" stroke="#7a5510" stroke-width="0.6"/><path d="M11.3 11.5 L16.5 9.8 L20.6 11.3 L15.2 13.3 Z" fill="#fdeea0" stroke="#7a5510" stroke-width="0.6"/><path d="M15.2 13.3 L20.6 11.3 L20.6 17.9 L15.2 20.6 Z" fill="#f9e05a" stroke="#7a5510" stroke-width="0.6"/></svg>
<div class="tt" style="left:48px;top:308px;">(-) 后臂油缸&lt;2&gt; (默认&lt;&lt;默认&gt;_显示状态 1&gt;)</div>
<div class="exp" style="top:337px;left:9px"></div>
<svg class="abs" style="left:23px;top:329px" width="24" height="24" viewBox="0 0 24 24"><path d="M4.2 8.3 L7.4 7.3 L7.4 5.1 L8.6 3.9 L11.9 3.1 L16.4 4.5 L16.5 9.8 L20.6 11.3 L20.6 17.9 L15.2 20.6 L4.2 12.5 Z" fill="#f6c91c" stroke="#5a3c08" stroke-width="1.1" stroke-linejoin="round"/><path d="M8.6 3.9 L11.9 3.1 L16.4 4.5 L11.3 6 Z" fill="#fbe58a"/><path d="M11.3 6 L16.4 4.5 L16.5 9.8 L11.3 11.5 Z" fill="#f9e05a" stroke="#7a5510" stroke-width="0.6"/><path d="M11.3 11.5 L16.5 9.8 L20.6 11.3 L15.2 13.3 Z" fill="#fdeea0" stroke="#7a5510" stroke-width="0.6"/><path d="M15.2 13.3 L20.6 11.3 L20.6 17.9 L15.2 20.6 Z" fill="#f9e05a" stroke="#7a5510" stroke-width="0.6"/></svg>
<div class="tt" style="left:48px;top:330px;">(-) 后臂油缸活塞&lt;1&gt; (默认&lt;&lt;默认&gt;_显示状态 1&gt;)</div>
<div class="exp" style="top:359px;left:9px"></div>
<svg class="abs" style="left:23px;top:351px" width="24" height="24" viewBox="0 0 24 24"><path d="M4.2 8.3 L7.4 7.3 L7.4 5.1 L8.6 3.9 L11.9 3.1 L16.4 4.5 L16.5 9.8 L20.6 11.3 L20.6 17.9 L15.2 20.6 L4.2 12.5 Z" fill="#f6c91c" stroke="#5a3c08" stroke-width="1.1" stroke-linejoin="round"/><path d="M8.6 3.9 L11.9 3.1 L16.4 4.5 L11.3 6 Z" fill="#fbe58a"/><path d="M11.3 6 L16.4 4.5 L16.5 9.8 L11.3 11.5 Z" fill="#f9e05a" stroke="#7a5510" stroke-width="0.6"/><path d="M11.3 11.5 L16.5 9.8 L20.6 11.3 L15.2 13.3 Z" fill="#fdeea0" stroke="#7a5510" stroke-width="0.6"/><path d="M15.2 13.3 L20.6 11.3 L20.6 17.9 L15.2 20.6 Z" fill="#f9e05a" stroke="#7a5510" stroke-width="0.6"/></svg>
<div class="tt" style="left:48px;top:352px;">(-) 后臂油缸活塞&lt;2&gt; (默认&lt;&lt;默认&gt;_显示状态 1&gt;)</div>
<div class="exp" style="top:381px;left:9px"></div>
<svg class="abs" style="left:23px;top:373px" width="24" height="24" viewBox="0 0 24 24"><path d="M4.2 8.3 L7.4 7.3 L7.4 5.1 L8.6 3.9 L11.9 3.1 L16.4 4.5 L16.5 9.8 L20.6 11.3 L20.6 17.9 L15.2 20.6 L4.2 12.5 Z" fill="#f6c91c" stroke="#5a3c08" stroke-width="1.1" stroke-linejoin="round"/><path d="M8.6 3.9 L11.9 3.1 L16.4 4.5 L11.3 6 Z" fill="#fbe58a"/><path d="M11.3 6 L16.4 4.5 L16.5 9.8 L11.3 11.5 Z" fill="#f9e05a" stroke="#7a5510" stroke-width="0.6"/><path d="M11.3 11.5 L16.5 9.8 L20.6 11.3 L15.2 13.3 Z" fill="#fdeea0" stroke="#7a5510" stroke-width="0.6"/><path d="M15.2 13.3 L20.6 11.3 L20.6 17.9 L15.2 20.6 Z" fill="#f9e05a" stroke="#7a5510" stroke-width="0.6"/></svg>
<div class="tt" style="left:48px;top:374px;">(-) 前后臂油缸&lt;1&gt; (默认&lt;&lt;默认&gt;_显示状态 1&gt;)</div>
<div class="exp" style="top:403px;left:9px"></div>
<svg class="abs" style="left:23px;top:395px" width="24" height="24" viewBox="0 0 24 24"><path d="M4.2 8.3 L7.4 7.3 L7.4 5.1 L8.6 3.9 L11.9 3.1 L16.4 4.5 L16.5 9.8 L20.6 11.3 L20.6 17.9 L15.2 20.6 L4.2 12.5 Z" fill="#f6c91c" stroke="#5a3c08" stroke-width="1.1" stroke-linejoin="round"/><path d="M8.6 3.9 L11.9 3.1 L16.4 4.5 L11.3 6 Z" fill="#fbe58a"/><path d="M11.3 6 L16.4 4.5 L16.5 9.8 L11.3 11.5 Z" fill="#f9e05a" stroke="#7a5510" stroke-width="0.6"/><path d="M11.3 11.5 L16.5 9.8 L20.6 11.3 L15.2 13.3 Z" fill="#fdeea0" stroke="#7a5510" stroke-width="0.6"/><path d="M15.2 13.3 L20.6 11.3 L20.6 17.9 L15.2 20.6 Z" fill="#f9e05a" stroke="#7a5510" stroke-width="0.6"/></svg>
<div class="tt" style="left:48px;top:396px;">(-) 前后臂油缸活塞&lt;1&gt; (默认&lt;&lt;默认&gt;_显示状态 1&gt;)</div>
<div class="exp" style="top:425px;left:9px"></div>
<svg class="abs" style="left:23px;top:417px" width="24" height="24" viewBox="0 0 24 24"><path d="M4.2 8.3 L7.4 7.3 L7.4 5.1 L8.6 3.9 L11.9 3.1 L16.4 4.5 L16.5 9.8 L20.6 11.3 L20.6 17.9 L15.2 20.6 L4.2 12.5 Z" fill="#f6c91c" stroke="#5a3c08" stroke-width="1.1" stroke-linejoin="round"/><path d="M8.6 3.9 L11.9 3.1 L16.4 4.5 L11.3 6 Z" fill="#fbe58a"/><path d="M11.3 6 L16.4 4.5 L16.5 9.8 L11.3 11.5 Z" fill="#f9e05a" stroke="#7a5510" stroke-width="0.6"/><path d="M11.3 11.5 L16.5 9.8 L20.6 11.3 L15.2 13.3 Z" fill="#fdeea0" stroke="#7a5510" stroke-width="0.6"/><path d="M15.2 13.3 L20.6 11.3 L20.6 17.9 L15.2 20.6 Z" fill="#f9e05a" stroke="#7a5510" stroke-width="0.6"/></svg>
<div class="tt" style="left:48px;top:418px;">(-) 铲斗连杆&lt;1&gt; (默认&lt;&lt;默认&gt;_显示状态 1&gt;)</div>
<div class="exp" style="top:447px;left:9px"></div>
<svg class="abs" style="left:23px;top:439px" width="24" height="24" viewBox="0 0 24 24"><path d="M4.2 8.3 L7.4 7.3 L7.4 5.1 L8.6 3.9 L11.9 3.1 L16.4 4.5 L16.5 9.8 L20.6 11.3 L20.6 17.9 L15.2 20.6 L4.2 12.5 Z" fill="#f6c91c" stroke="#5a3c08" stroke-width="1.1" stroke-linejoin="round"/><path d="M8.6 3.9 L11.9 3.1 L16.4 4.5 L11.3 6 Z" fill="#fbe58a"/><path d="M11.3 6 L16.4 4.5 L16.5 9.8 L11.3 11.5 Z" fill="#f9e05a" stroke="#7a5510" stroke-width="0.6"/><path d="M11.3 11.5 L16.5 9.8 L20.6 11.3 L15.2 13.3 Z" fill="#fdeea0" stroke="#7a5510" stroke-width="0.6"/><path d="M15.2 13.3 L20.6 11.3 L20.6 17.9 L15.2 20.6 Z" fill="#f9e05a" stroke="#7a5510" stroke-width="0.6"/></svg>
<div class="tt" style="left:48px;top:440px;">(-) 铲斗连杆&lt;2&gt; (默认&lt;&lt;默认&gt;_显示状态 1&gt;)</div>
<div class="exp" style="top:469px;left:9px"></div>
<svg class="abs" style="left:23px;top:461px" width="24" height="24" viewBox="0 0 24 24"><path d="M4.2 8.3 L7.4 7.3 L7.4 5.1 L8.6 3.9 L11.9 3.1 L16.4 4.5 L16.5 9.8 L20.6 11.3 L20.6 17.9 L15.2 20.6 L4.2 12.5 Z" fill="#f6c91c" stroke="#5a3c08" stroke-width="1.1" stroke-linejoin="round"/><path d="M8.6 3.9 L11.9 3.1 L16.4 4.5 L11.3 6 Z" fill="#fbe58a"/><path d="M11.3 6 L16.4 4.5 L16.5 9.8 L11.3 11.5 Z" fill="#f9e05a" stroke="#7a5510" stroke-width="0.6"/><path d="M11.3 11.5 L16.5 9.8 L20.6 11.3 L15.2 13.3 Z" fill="#fdeea0" stroke="#7a5510" stroke-width="0.6"/><path d="M15.2 13.3 L20.6 11.3 L20.6 17.9 L15.2 20.6 Z" fill="#f9e05a" stroke="#7a5510" stroke-width="0.6"/></svg>
<div class="tt" style="left:48px;top:462px;">(-) 铲斗油缸连杆&lt;1&gt; (默认&lt;&lt;默认&gt;_显示状态 1&gt;)</div>
<div class="exp" style="top:491px;left:9px"></div>
<svg class="abs" style="left:23px;top:483px" width="24" height="24" viewBox="0 0 24 24"><path d="M4.2 8.3 L7.4 7.3 L7.4 5.1 L8.6 3.9 L11.9 3.1 L16.4 4.5 L16.5 9.8 L20.6 11.3 L20.6 17.9 L15.2 20.6 L4.2 12.5 Z" fill="#f6c91c" stroke="#5a3c08" stroke-width="1.1" stroke-linejoin="round"/><path d="M8.6 3.9 L11.9 3.1 L16.4 4.5 L11.3 6 Z" fill="#fbe58a"/><path d="M11.3 6 L16.4 4.5 L16.5 9.8 L11.3 11.5 Z" fill="#f9e05a" stroke="#7a5510" stroke-width="0.6"/><path d="M11.3 11.5 L16.5 9.8 L20.6 11.3 L15.2 13.3 Z" fill="#fdeea0" stroke="#7a5510" stroke-width="0.6"/><path d="M15.2 13.3 L20.6 11.3 L20.6 17.9 L15.2 20.6 Z" fill="#f9e05a" stroke="#7a5510" stroke-width="0.6"/></svg>
<div class="tt" style="left:48px;top:484px;">(-) 前臂铲斗油缸活塞&lt;1&gt; (默认&lt;&lt;默认&gt;_显示状态 1&gt;)</div>
<div class="exp" style="top:513px;left:9px"></div>
<svg class="abs" style="left:23px;top:505px" width="24" height="24" viewBox="0 0 24 24"><path d="M4.2 8.3 L7.4 7.3 L7.4 5.1 L8.6 3.9 L11.9 3.1 L16.4 4.5 L16.5 9.8 L20.6 11.3 L20.6 17.9 L15.2 20.6 L4.2 12.5 Z" fill="#f6c91c" stroke="#5a3c08" stroke-width="1.1" stroke-linejoin="round"/><path d="M8.6 3.9 L11.9 3.1 L16.4 4.5 L11.3 6 Z" fill="#fbe58a"/><path d="M11.3 6 L16.4 4.5 L16.5 9.8 L11.3 11.5 Z" fill="#f9e05a" stroke="#7a5510" stroke-width="0.6"/><path d="M11.3 11.5 L16.5 9.8 L20.6 11.3 L15.2 13.3 Z" fill="#fdeea0" stroke="#7a5510" stroke-width="0.6"/><path d="M15.2 13.3 L20.6 11.3 L20.6 17.9 L15.2 20.6 Z" fill="#f9e05a" stroke="#7a5510" stroke-width="0.6"/></svg>
<div class="tt" style="left:48px;top:506px;">(-) 前臂铲斗油缸&lt;1&gt; (默认&lt;&lt;默认&gt;_显示状态 1&gt;)</div>
<div class="exp" style="top:535px;left:9px"></div>
<svg class="abs" style="left:23px;top:527px" width="24" height="24" viewBox="0 0 24 24"><path d="M4.2 8.3 L7.4 7.3 L7.4 5.1 L8.6 3.9 L11.9 3.1 L16.4 4.5 L16.5 9.8 L20.6 11.3 L20.6 17.9 L15.2 20.6 L4.2 12.5 Z" fill="#f6c91c" stroke="#5a3c08" stroke-width="1.1" stroke-linejoin="round"/><path d="M8.6 3.9 L11.9 3.1 L16.4 4.5 L11.3 6 Z" fill="#fbe58a"/><path d="M11.3 6 L16.4 4.5 L16.5 9.8 L11.3 11.5 Z" fill="#f9e05a" stroke="#7a5510" stroke-width="0.6"/><path d="M11.3 11.5 L16.5 9.8 L20.6 11.3 L15.2 13.3 Z" fill="#fdeea0" stroke="#7a5510" stroke-width="0.6"/><path d="M15.2 13.3 L20.6 11.3 L20.6 17.9 L15.2 20.6 Z" fill="#f9e05a" stroke="#7a5510" stroke-width="0.6"/></svg>
<div class="tt" style="left:48px;top:528px;">(-) 从动轮&lt;2&gt; (默认&lt;&lt;默认&gt;_显示状态 1&gt;)</div>
<div class="exp" style="top:557px;left:9px"></div>
<svg class="abs" style="left:23px;top:549px" width="24" height="24" viewBox="0 0 24 24"><path d="M4.2 8.3 L7.4 7.3 L7.4 5.1 L8.6 3.9 L11.9 3.1 L16.4 4.5 L16.5 9.8 L20.6 11.3 L20.6 17.9 L15.2 20.6 L4.2 12.5 Z" fill="#f6c91c" stroke="#5a3c08" stroke-width="1.1" stroke-linejoin="round"/><path d="M8.6 3.9 L11.9 3.1 L16.4 4.5 L11.3 6 Z" fill="#fbe58a"/><path d="M11.3 6 L16.4 4.5 L16.5 9.8 L11.3 11.5 Z" fill="#f9e05a" stroke="#7a5510" stroke-width="0.6"/><path d="M11.3 11.5 L16.5 9.8 L20.6 11.3 L15.2 13.3 Z" fill="#fdeea0" stroke="#7a5510" stroke-width="0.6"/><path d="M15.2 13.3 L20.6 11.3 L20.6 17.9 L15.2 20.6 Z" fill="#f9e05a" stroke="#7a5510" stroke-width="0.6"/></svg>
<div class="tt" style="left:48px;top:550px;">(-) 主动轮&lt;1&gt; (默认&lt;&lt;默认&gt;_显示状态 1&gt;)</div>
<div class="exp" style="top:579px;left:9px"></div>
<svg class="abs" style="left:23px;top:571px" width="24" height="24" viewBox="0 0 24 24"><path d="M4.2 8.3 L7.4 7.3 L7.4 5.1 L8.6 3.9 L11.9 3.1 L16.4 4.5 L16.5 9.8 L20.6 11.3 L20.6 17.9 L15.2 20.6 L4.2 12.5 Z" fill="#f6c91c" stroke="#5a3c08" stroke-width="1.1" stroke-linejoin="round"/><path d="M8.6 3.9 L11.9 3.1 L16.4 4.5 L11.3 6 Z" fill="#fbe58a"/><path d="M11.3 6 L16.4 4.5 L16.5 9.8 L11.3 11.5 Z" fill="#f9e05a" stroke="#7a5510" stroke-width="0.6"/><path d="M11.3 11.5 L16.5 9.8 L20.6 11.3 L15.2 13.3 Z" fill="#fdeea0" stroke="#7a5510" stroke-width="0.6"/><path d="M15.2 13.3 L20.6 11.3 L20.6 17.9 L15.2 20.6 Z" fill="#f9e05a" stroke="#7a5510" stroke-width="0.6"/></svg>
<div class="tt" style="left:48px;top:572px;">(-) 主动轮&lt;2&gt; (默认&lt;&lt;默认&gt;_显示状态 1&gt;)</div>
<div class="exp" style="top:601px;left:9px"></div>
<svg class="abs" style="left:23px;top:593px" width="24" height="24" viewBox="0 0 24 24"><path d="M4.2 8.3 L7.4 7.3 L7.4 5.1 L8.6 3.9 L11.9 3.1 L16.4 4.5 L16.5 9.8 L20.6 11.3 L20.6 17.9 L15.2 20.6 L4.2 12.5 Z" fill="#f6c91c" stroke="#5a3c08" stroke-width="1.1" stroke-linejoin="round"/><path d="M8.6 3.9 L11.9 3.1 L16.4 4.5 L11.3 6 Z" fill="#fbe58a"/><path d="M11.3 6 L16.4 4.5 L16.5 9.8 L11.3 11.5 Z" fill="#f9e05a" stroke="#7a5510" stroke-width="0.6"/><path d="M11.3 11.5 L16.5 9.8 L20.6 11.3 L15.2 13.3 Z" fill="#fdeea0" stroke="#7a5510" stroke-width="0.6"/><path d="M15.2 13.3 L20.6 11.3 L20.6 17.9 L15.2 20.6 Z" fill="#f9e05a" stroke="#7a5510" stroke-width="0.6"/></svg>
<div class="tt" style="left:48px;top:594px;">履带&lt;1&gt; (默认&lt;&lt;默认&gt;_显示状态 1&gt;)</div>
<div class="exp" style="top:623px;left:9px"></div>
<svg class="abs" style="left:23px;top:615px" width="24" height="24" viewBox="0 0 24 24"><path d="M4.2 8.3 L7.4 7.3 L7.4 5.1 L8.6 3.9 L11.9 3.1 L16.4 4.5 L16.5 9.8 L20.6 11.3 L20.6 17.9 L15.2 20.6 L4.2 12.5 Z" fill="#f6c91c" stroke="#5a3c08" stroke-width="1.1" stroke-linejoin="round"/><path d="M8.6 3.9 L11.9 3.1 L16.4 4.5 L11.3 6 Z" fill="#fbe58a"/><path d="M11.3 6 L16.4 4.5 L16.5 9.8 L11.3 11.5 Z" fill="#f9e05a" stroke="#7a5510" stroke-width="0.6"/><path d="M11.3 11.5 L16.5 9.8 L20.6 11.3 L15.2 13.3 Z" fill="#fdeea0" stroke="#7a5510" stroke-width="0.6"/><path d="M15.2 13.3 L20.6 11.3 L20.6 17.9 L15.2 20.6 Z" fill="#f9e05a" stroke="#7a5510" stroke-width="0.6"/></svg>
<div class="tt" style="left:48px;top:616px;">履带&lt;2&gt; (默认&lt;&lt;默认&gt;_显示状态 1&gt;)</div>
<div class="exp" style="top:645px;left:9px"></div>
<svg class="abs" style="left:23px;top:637px" width="24" height="24" viewBox="0 0 24 24"><path d="M4.2 8.3 L7.4 7.3 L7.4 5.1 L8.6 3.9 L11.9 3.1 L16.4 4.5 L16.5 9.8 L20.6 11.3 L20.6 17.9 L15.2 20.6 L4.2 12.5 Z" fill="#f6c91c" stroke="#5a3c08" stroke-width="1.1" stroke-linejoin="round"/><path d="M8.6 3.9 L11.9 3.1 L16.4 4.5 L11.3 6 Z" fill="#fbe58a"/><path d="M11.3 6 L16.4 4.5 L16.5 9.8 L11.3 11.5 Z" fill="#f9e05a" stroke="#7a5510" stroke-width="0.6"/><path d="M11.3 11.5 L16.5 9.8 L20.6 11.3 L15.2 13.3 Z" fill="#fdeea0" stroke="#7a5510" stroke-width="0.6"/><path d="M15.2 13.3 L20.6 11.3 L20.6 17.9 L15.2 20.6 Z" fill="#f9e05a" stroke="#7a5510" stroke-width="0.6"/></svg>
<div class="tt" style="left:48px;top:638px;">(-) 从动轮&lt;3&gt; (默认&lt;&lt;默认&gt;_显示状态 1&gt;)</div>
<div class="exp" style="top:667px;left:9px"></div>
<svg class="abs" style="left:23px;top:659px" width="24" height="24" viewBox="0 0 24 24"><path d="M4.2 8.3 L7.4 7.3 L7.4 5.1 L8.6 3.9 L11.9 3.1 L16.4 4.5 L16.5 9.8 L20.6 11.3 L20.6 17.9 L15.2 20.6 L4.2 12.5 Z" fill="#f6c91c" stroke="#5a3c08" stroke-width="1.1" stroke-linejoin="round"/><path d="M8.6 3.9 L11.9 3.1 L16.4 4.5 L11.3 6 Z" fill="#fbe58a"/><path d="M11.3 6 L16.4 4.5 L16.5 9.8 L11.3 11.5 Z" fill="#f9e05a" stroke="#7a5510" stroke-width="0.6"/><path d="M11.3 11.5 L16.5 9.8 L20.6 11.3 L15.2 13.3 Z" fill="#fdeea0" stroke="#7a5510" stroke-width="0.6"/><path d="M15.2 13.3 L20.6 11.3 L20.6 17.9 L15.2 20.6 Z" fill="#f9e05a" stroke="#7a5510" stroke-width="0.6"/></svg>
<div class="tt" style="left:48px;top:660px;">(-) 顶盖&lt;1&gt; (默认&lt;&lt;默认&gt;_显示状态 1&gt;)</div>
<div class="exp" style="top:689px;left:9px"></div>
<svg class="abs" style="left:23px;top:681px" width="24" height="24" viewBox="0 0 24 24"><path d="M4.2 8.3 L7.4 7.3 L7.4 5.1 L8.6 3.9 L11.9 3.1 L16.4 4.5 L16.5 9.8 L20.6 11.3 L20.6 17.9 L15.2 20.6 L4.2 12.5 Z" fill="#f6c91c" stroke="#5a3c08" stroke-width="1.1" stroke-linejoin="round"/><path d="M8.6 3.9 L11.9 3.1 L16.4 4.5 L11.3 6 Z" fill="#fbe58a"/><path d="M11.3 6 L16.4 4.5 L16.5 9.8 L11.3 11.5 Z" fill="#f9e05a" stroke="#7a5510" stroke-width="0.6"/><path d="M11.3 11.5 L16.5 9.8 L20.6 11.3 L15.2 13.3 Z" fill="#fdeea0" stroke="#7a5510" stroke-width="0.6"/><path d="M15.2 13.3 L20.6 11.3 L20.6 17.9 L15.2 20.6 Z" fill="#f9e05a" stroke="#7a5510" stroke-width="0.6"/></svg>
<div class="tt" style="left:48px;top:682px;">(-) 门&lt;1&gt; (默认&lt;&lt;默认&gt;_显示状态 1&gt;)</div>
<div class="exp" style="top:711px;left:9px"></div>
<svg class="abs" style="left:23px;top:703px" width="24" height="24" viewBox="0 0 24 24"><path d="M4.2 8.3 L7.4 7.3 L7.4 5.1 L8.6 3.9 L11.9 3.1 L16.4 4.5 L16.5 9.8 L20.6 11.3 L20.6 17.9 L15.2 20.6 L4.2 12.5 Z" fill="#f6c91c" stroke="#5a3c08" stroke-width="1.1" stroke-linejoin="round"/><path d="M8.6 3.9 L11.9 3.1 L16.4 4.5 L11.3 6 Z" fill="#fbe58a"/><path d="M11.3 6 L16.4 4.5 L16.5 9.8 L11.3 11.5 Z" fill="#f9e05a" stroke="#7a5510" stroke-width="0.6"/><path d="M11.3 11.5 L16.5 9.8 L20.6 11.3 L15.2 13.3 Z" fill="#fdeea0" stroke="#7a5510" stroke-width="0.6"/><path d="M15.2 13.3 L20.6 11.3 L20.6 17.9 L15.2 20.6 Z" fill="#f9e05a" stroke="#7a5510" stroke-width="0.6"/></svg>
<div class="tt" style="left:48px;top:704px;">(-) di&lt;1&gt; (默认&lt;&lt;默认&gt;_显示状态 1&gt;)</div>
<div class="exp" style="top:733px;left:9px"></div>
<svg class="abs" style="left:23px;top:725px" width="24" height="24" viewBox="0 0 24 24"><path d="M4.2 8.3 L7.4 7.3 L7.4 5.1 L8.6 3.9 L11.9 3.1 L16.4 4.5 L16.5 9.8 L20.6 11.3 L20.6 17.9 L15.2 20.6 L4.2 12.5 Z" fill="#f6c91c" stroke="#5a3c08" stroke-width="1.1" stroke-linejoin="round"/><path d="M8.6 3.9 L11.9 3.1 L16.4 4.5 L11.3 6 Z" fill="#fbe58a"/><path d="M11.3 6 L16.4 4.5 L16.5 9.8 L11.3 11.5 Z" fill="#f9e05a" stroke="#7a5510" stroke-width="0.6"/><path d="M11.3 11.5 L16.5 9.8 L20.6 11.3 L15.2 13.3 Z" fill="#fdeea0" stroke="#7a5510" stroke-width="0.6"/><path d="M15.2 13.3 L20.6 11.3 L20.6 17.9 L15.2 20.6 Z" fill="#f9e05a" stroke="#7a5510" stroke-width="0.6"/></svg>
<div class="tt" style="left:48px;top:726px;">(-) 100、650销&lt;1&gt; (默认&lt;&lt;默认&gt;_显示状态 1&gt;)</div>
</div>
<div class="abs" style="left:202px;top:31px;width:15px;height:742px;background:#f0f0f0"></div>
<div class="abs" style="left:202px;top:48px;width:15px;height:531px;background:#cdcdcd"></div>
<svg class="abs" style="left:205px;top:37px" width="10" height="8"><path d="M1.5 6 L5 2.5 L8.5 6" stroke="#606060" stroke-width="1.6" fill="none"/></svg>
<svg class="abs" style="left:205px;top:760px" width="10" height="8"><path d="M1.5 2 L5 5.5 L8.5 2" stroke="#606060" stroke-width="1.6" fill="none"/></svg>
<div class="abs" style="left:2px;top:773px;width:200px;height:16px;background:#f0f0f0"></div>
<div class="abs" style="left:19px;top:774px;width:93px;height:15px;background:#cdcdcd"></div>
<svg class="abs" style="left:6px;top:776px" width="8" height="10"><path d="M6 1.5 L2.5 5 L6 8.5" stroke="#606060" stroke-width="1.6" fill="none"/></svg>
<svg class="abs" style="left:189px;top:776px" width="8" height="10"><path d="M2 1.5 L5.5 5 L2 8.5" stroke="#606060" stroke-width="1.6" fill="none"/></svg>
<div class="abs" style="left:202px;top:773px;width:15px;height:16px;background:#f0f0f0"></div>
<div class="abs" style="left:218px;top:0;width:1px;height:806px;background:#8c8c8c"></div>
</div>
<svg class="abs" style="left:791px;top:0" width="647" height="795" viewBox="791 0 647 795">
<defs>
<linearGradient id="bggrad" gradientUnits="userSpaceOnUse" x1="1060" y1="-40" x2="1300" y2="200"><stop offset="0" stop-color="#ffffff"/><stop offset="1" stop-color="#e4e7ed"/></linearGradient>
<filter id="blur1" x="-50%" y="-50%" width="200%" height="200%"><feGaussianBlur stdDeviation="28"/></filter><filter id="blur3" x="-50%" y="-50%" width="200%" height="200%"><feGaussianBlur stdDeviation="45"/></filter><filter id="blur2" x="-50%" y="-50%" width="200%" height="200%"><feGaussianBlur stdDeviation="12"/></filter>
<linearGradient id="yel" x1="0" y1="0" x2="1" y2="1"><stop offset="0" stop-color="#ffd22a"/><stop offset="1" stop-color="#f0b010"/></linearGradient>
<linearGradient id="trk" x1="0" y1="0" x2="0" y2="1"><stop offset="0" stop-color="#3a3a3a"/><stop offset="1" stop-color="#1c1c1c"/></linearGradient>
<pattern id="stripes" width="6" height="6.5" patternUnits="userSpaceOnUse" patternTransform="rotate(-16)"><rect width="6" height="6.5" fill="#1e1e1e"/><rect y="0" width="6" height="3" fill="#4c4c4c"/></pattern>
</defs>
<rect x="791" y="0" width="647" height="795" fill="#ffffff"/>
<rect x="791" y="0" width="647" height="600" fill="url(#bggrad)"/>
<g opacity="0.12">
<polygon points="1120,120 1223,60 1356,3 1383,57 1470,360 1470,600 1300,420 1180,260" fill="#7a8090" filter="url(#blur3)"/>
</g>
<g opacity="0.35">
<polygon points="1360,3 1383,57 1440,300 1470,300 1410,40 1380,0" fill="#8088a0" filter="url(#blur2)"/>
</g>
<rect x="999" y="560" width="460" height="240" fill="#f5f6f8"/>
<g opacity="0.4">
<polygon points="990,790 1438,596 1460,596 1460,618 1000,814" fill="#8a90a0" filter="url(#blur2)"/>
</g>
<polygon points="790,247 1131,101 1150,180 1234,112 1223,60 1356,3 1438,374 1438,534 843,795 790,795" fill="#d6fdd6" stroke="#111" stroke-width="1.2" stroke-linejoin="round"/>
<polygon points="1356,3 1383,57 1438,292 1438,374" fill="#7a9c7b" stroke="#111" stroke-width="1.2"/>
<polygon points="843,795 1438,534 1438,602 999,795" fill="#37473a" stroke="#111" stroke-width="1.2"/>

<!-- orange wedge behind body -->
<polygon points="1131,101 1162,135 1186,137 1180,150 1147,175" fill="#b85408" stroke="#111" stroke-width="0.8"/>
<polygon points="1160,133 1186,137 1175,160 1165,150" fill="#d86a0c"/>
<!-- handrail -->
<path d="M1149,168 L1150,158 L1174,127 L1183,130 L1186,140" fill="none" stroke="#222" stroke-width="1.6"/><path d="M1137,165 L1143,160 L1150,170" fill="none" stroke="#222" stroke-width="1.4"/>

<!-- orange column -->
<path d="M1188,297 L1259,283 L1278,323 L1316,478 Q1317,488 1308,492 L1235,520.5 Q1227,522 1225,515.7 Z" fill="#d2690a" stroke="#111" stroke-width="1"/>
<polygon points="1188,297 1200,296 1240,514 1233,520 1225,515.7" fill="#9a4606"/>
<polygon points="1200,296 1207,296 1249,512 1240,514" fill="#e8781a"/>
<path d="M1200,296 L1240,514 M1209,296 L1251,511" stroke="#222" stroke-width="0.8"/>
<path d="M1272,318 L1311,482" stroke="#222" stroke-width="0.9"/>
<!-- cone -->
<path d="M1050,463 L1081,432 L1120,427 L1131,444 L1184,465.5 L1194,468 L1215,511 L1158,573 L1072,590 L1045,554 L1043,540 Z" fill="#d86c0c" stroke="#111" stroke-width="1" stroke-linejoin="round"/>
<polygon points="1062,484.6 1098,477.4 1143.6,563.6 1074,578" fill="#6c3204" stroke="#111" stroke-width="0.8"/>
<polygon points="1098,477.4 1129,448.7 1205.8,508.6 1148.4,563.6 1143.6,563.6" fill="#884006" stroke="#111" stroke-width="0.8"/>
<path d="M1098,477.4 L1143.6,563.6" stroke="#e07a20" stroke-width="2"/>
<path d="M1058,468 L1082,438 L1118,433 L1126,445 L1103,471 L1061,477 Z" fill="none" stroke="#6a3000" stroke-width="0.7"/>
<!-- filler behind cab -->
<polygon points="1140,215 1165,208 1200,212 1244,218 1256,242 1262,270 1250,292 1186,300 1170,280 1150,250" fill="#3a3a3e"/>
<polygon points="1136,222 1165,210 1200,212 1170,250 1150,245" fill="#f0b818"/>
<!-- left track -->
<polygon points="1117.7,226.9 1132.4,221.6 1166,262.7 1178.8,328 1193.6,355.6 1194.7,362 1157.7,374.6 1153.5,370 1143,347" fill="url(#stripes)" stroke="#111" stroke-width="1"/>
<polygon points="1143,345 1183,332 1194.7,362 1157.7,374.6 1153.5,370" fill="#1c1c1c"/>
<path d="M1145,344 L1183,331" stroke="#8a8a8a" stroke-width="2"/>
<!-- right track -->
<polygon points="1289.6,214.2 1291.5,218 1310,305.5 1310,309 1272.8,324 1259.8,298 1252.3,249.6 1256,242" fill="url(#stripes)" stroke="#111" stroke-width="1"/>
<polygon points="1259.8,298 1306,287 1310,309 1272.8,324" fill="#1c1c1c"/>
<path d="M1261,297 L1306,286" stroke="#8a8a8a" stroke-width="2"/>
<!-- undercarriage -->
<polygon points="1164,262.7 1186,268 1240,270 1259,271 1250,290 1217,286 1193,296 1186,326 1178.8,328 1176.7,279.6" fill="#4a4a4e"/>
<polygon points="1172.5,298.6 1185,281.7 1198,283.8 1245,272 1259,271 1250,283 1217,284 1189,294.4 1176.7,307" fill="#b8b8bc" stroke="#111" stroke-width="0.7"/>
<polygon points="1176.7,307 1189,294.4 1193.6,311 1185,328" fill="#6a5a78" stroke="#111" stroke-width="0.7"/>
<polygon points="1189,294.4 1217,284 1259,279 1259,286 1193,298" fill="#1a1a1a"/>
<!-- body tan side face -->
<polygon points="1213,112 1281,125.6 1298,127.4 1310,131 1316,138 1331,159 1331,165.6 1254.7,242 1244,218 1230,205 1200,200 1165,205 1152,176" fill="#f6c01a" stroke="#111" stroke-width="1"/>
<polygon points="1296.4,130.8 1310,131 1316,138 1331,159 1313.8,146.5 1244.3,217.7 1233.9,200.3" fill="#ffd83a"/>
<path d="M1296.4,130.8 L1233.9,200.3" stroke="#222" stroke-width="0.8"/>
<polygon points="1313.8,146.5 1331,159 1331,165.6 1254.7,242 1244.3,217.7" fill="#c48c64" stroke="#111" stroke-width="1"/>
<g stroke="#2a2018" stroke-width="1.1"><path d="M1270,190 L1298,160 M1274,195 L1301,165 M1278,200 L1304,170 M1282,205 L1307,175 M1286,209 L1310,180"/></g>
<path d="M1267,186 L1281,213" stroke="#222" stroke-width="1.6"/>
<!-- grille panel -->
<polygon points="1223,115 1279,127 1273,136.5 1223,127" fill="#2a2a2a"/>
<polygon points="1183,155 1204.8,130.3 1273,136.5 1276,146 1248,170.6 1186,161" fill="#2c2c2c" stroke="#111" stroke-width="0.8"/>
<g stroke="#5a5a5a" stroke-width="0.8">
<path d="M1194,155 L1212,134 M1201,157 L1219,135 M1208,159 L1226,136 M1215,161 L1233,137 M1222,163 L1240,138 M1229,165 L1247,139 M1236,167 L1254,140 M1243,169 L1261,141"/>
</g>
<!-- exhaust / cap -->
<rect x="1210" y="112" width="12" height="16" rx="4" fill="#2a2a2a" transform="rotate(20 1216 120)"/>
<circle cx="1230" cy="184" r="7" fill="#2a2a2a"/>
<circle cx="1229" cy="182" r="3.5" fill="#444"/>
<!-- boom (upper arm) -->
<polygon points="988,252 995,221 1040,197 1080,181 1101,161 1126,164 1138,174 1176,198 1165,212 1136,206 1116,203 1100,209.6 1080,215 1040,233.6 1000,249" fill="#c48c60" stroke="#111" stroke-width="1"/>
<polygon points="995,221 1040,197 1080,181 1101,163 1114,163 1100,181 1080,192 1040,209.6 1000,229.5" fill="#f8c21a" stroke="#111" stroke-width="0.8"/>
<polygon points="1008,234 1099,186 1100,201 1011,241" fill="none" stroke="#222" stroke-width="0.9"/>
<text x="0" y="0" font-family="Liberation Serif" font-style="italic" font-weight="bold" font-size="19" fill="#3c34a0" transform="translate(1017,241) rotate(-24)" letter-spacing="6">WOLF</text>
<path d="M1012,193 L1079,175" stroke="#2a2a30" stroke-width="8" stroke-linecap="round"/>
<path d="M1000,199 L1012,194" stroke="#c8c8d8" stroke-width="3.5"/>
<circle cx="999" cy="200" r="4" fill="#2a2a2a"/>
<circle cx="1085" cy="172" r="4.5" fill="#f8c21a" stroke="#111" stroke-width="0.8"/>
<!-- stick -->
<polygon points="966,219 986,200 1000,206 1000,232 944,352 937,365 902,365 908,336 960,240" fill="#f6b820" stroke="#111" stroke-width="1"/>
<polygon points="982,205 1000,209 1000,232 944,352 937,365 921,364 975,240" fill="#c28a5e" stroke="#111" stroke-width="0.8"/>
<path d="M928,310 L911,334" stroke="#d8d8e0" stroke-width="3"/>
<path d="M960,250 L929,309" stroke="#26262c" stroke-width="7" stroke-linecap="round"/>
<circle cx="912" cy="337" r="3.5" fill="#2a2a2a"/>
<!-- front cylinders near body -->
<polygon points="1133,231 1160,240 1166,252 1140,250" fill="#f8c21a" stroke="#111" stroke-width="0.6"/>
<path d="M1117,204 L1164,252" stroke="#26262c" stroke-width="9" stroke-linecap="round"/>
<path d="M1128,185 L1147,207" stroke="#9a9aa8" stroke-width="3.5"/>
<path d="M1147,207 L1164,233" stroke="#26262c" stroke-width="8" stroke-linecap="round"/>
<circle cx="1119" cy="180" r="6.5" fill="#2a2a2a"/>
<circle cx="1119" cy="180" r="2.5" fill="#888"/>
<rect x="1103" y="185" width="8" height="10" fill="#f8d030" stroke="#111" stroke-width="0.7"/>
<!-- cab -->
<polygon points="1223,189 1249.3,251 1252.4,262 1218.3,283.6 1193.4,221.5" fill="#1e1e22" stroke="#111" stroke-width="1"/>
<polygon points="1200,232 1216,222 1232,250 1240,270 1222,278 1212,262" fill="#3e3e42"/>
<polygon points="1208,262 1236,255 1240,268 1222,278" fill="#9a9a9e"/>
<polygon points="1222,200 1240,240 1246,256 1240,258" fill="#20208a" opacity="0.8"/>
<polygon points="1162.4,217 1192.7,222.3 1218.3,283.6 1185.7,279" fill="#141418" stroke="#111" stroke-width="1"/>
<polygon points="1166,221 1190,225.5 1213,279 1188,275" fill="#2e2a9c"/>
<path d="M1172,226 L1192,272 M1180,228 L1200,274" stroke="#4a44c0" stroke-width="1" opacity="0.6"/>
<polygon points="1164,212.2 1191.9,182 1223,189 1193.4,221.5" fill="#18181c" stroke="#111" stroke-width="1"/>
<polygon points="1170.2,208.4 1191.9,187.4 1212,190.5 1191.9,212.2" fill="#2e2ab0"/>
<path d="M1191,222 L1218,283" stroke="#c4c4c8" stroke-width="3.5"/>
<path d="M1194,220 L1221,190" stroke="#c4c4c8" stroke-width="3.5"/>
<path d="M1166,216 L1191,221" stroke="#8a8a90" stroke-width="1.5"/>
<!-- bucket -->
<polygon points="866.7,391 880,370.8 903.5,364 937,367 914,378 912,420 942,451 925,448 890,428 870,410" fill="#262628" stroke="#111" stroke-width="1"/>
<g stroke="#5a5a5a" stroke-width="1"><path d="M875,382 L884,426 M886,375 L896,432 M897,371 L908,438"/></g>
<polygon points="913.6,377.5 940.3,367.4 945.4,377.5 942,444.4 939,451 923.6,432 914,410" fill="#5e5070" stroke="#111" stroke-width="1"/>
<polygon points="902,365 908,338 918,334 922,362" fill="#f6b820" stroke="#111" stroke-width="0.7"/>
<!-- axis triad -->
<path d="M831,737 L812,746" stroke="#d83030" stroke-width="3"/>
<polygon points="803,748 811,742 813,750" fill="#c82020"/>
<polygon points="828,722 833,724 833,736 829,736" fill="#2020c0"/>
<path d="M831,737 L822,722" stroke="#2a8a2a" stroke-width="3.2"/>
<polygon points="820,715 817,722 827,721" fill="#40a040"/>
<text x="813" y="715" font-family="Liberation Serif" font-size="10" fill="#108010">Y</text>
<text x="822" y="719" font-family="Liberation Serif" font-size="8" fill="#2030e0">Z</text>
<text x="796" y="755" font-family="Liberation Serif" font-size="10" fill="#e01010">X</text>
</svg>

<div class="abs" style="left:571px;top:0;width:1px;height:806px;background:#1f78d6"></div><div class="abs" style="left:572px;top:0;width:1px;height:806px;background:#a9cdf0"></div>
<div class="abs" style="left:790px;top:0;width:1px;height:795px;background:#8c8c8c"></div>
<div class="abs" style="left:790px;top:344px;width:9px;height:39px;background:#f5f5f5;border:1px solid #8c8c8c;border-left:none"></div>
<div class="abs" style="left:791px;top:360px;width:6px;height:6px;border-radius:50%;background:#d8d8d8;border:1px solid #b0b0b0"></div>
<div class="abs" style="left:573px;top:789px;width:217px;height:6px;background:#f0f0f0"></div>
<div class="abs" style="left:573px;top:792px;width:217px;height:1px;background:#cfcfcf"></div>
<div class="abs" style="left:573px;top:795px;width:865px;height:1px;background:#5a5a5a"></div>
<div class="abs" style="left:573px;top:796px;width:865px;height:10px;background:#f5f5f5"></div>
<div class="abs" style="left:574px;top:796px;width:16px;height:10px;background:#b4b4b8;border:1px solid #9a9a9e;border-bottom:none;border-top:none"></div>
<div class="abs" style="left:590px;top:796px;width:16px;height:10px;background:#b4b4b8;border:1px solid #9a9a9e;border-bottom:none;border-top:none"></div>
<div class="abs" style="left:606px;top:796px;width:16px;height:10px;background:#b4b4b8;border:1px solid #9a9a9e;border-bottom:none;border-top:none"></div>
<div class="abs" style="left:622px;top:796px;width:16px;height:10px;background:#b4b4b8;border:1px solid #9a9a9e;border-bottom:none;border-top:none"></div>
<svg class="abs" style="left:574px;top:796px" width="64" height="10"><g fill="#8a8a8e"><rect x="4" y="2" width="1.5" height="8"/><path d="M12 2 L7 7 L12 12 Z"/><path d="M27 2 L22 7 L27 12 Z"/><path d="M37 2 L42 7 L37 12 Z"/><path d="M52 2 L57 7 L52 12 Z"/><rect x="58" y="2" width="1.5" height="8"/></g></svg>
<div class="abs" style="left:638px;top:796px;width:48px;height:10px;background:#fafafa;overflow:hidden"><div style="position:absolute;left:13px;top:-1px;font-size:12px;line-height:14px;color:#000">模型</div></div>
<div class="abs" style="left:686px;top:796px;width:60px;height:10px;background:#d9d9d9;border-left:1px solid #a8a8a8;border-right:1px solid #a8a8a8;overflow:hidden"><div style="position:absolute;left:8px;top:-1px;font-size:12px;line-height:14px;color:#000;white-space:nowrap">3D 视图</div></div>
<div class="abs" style="left:745px;top:796px;width:84px;height:10px;background:#d9d9d9;border-right:1px solid #a8a8a8;overflow:hidden"><div style="position:absolute;left:8px;top:-1px;font-size:12px;line-height:14px;color:#000;white-space:nowrap">运动算例 1</div></div>
</body></html>
